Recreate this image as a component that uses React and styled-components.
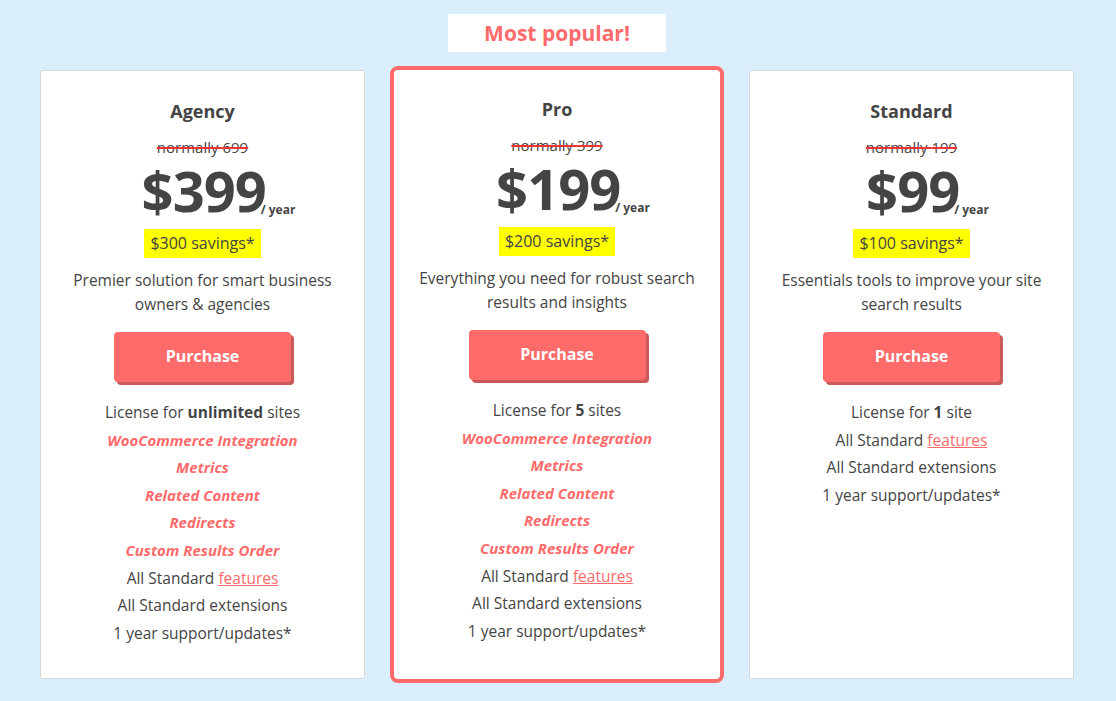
import React from 'react'
import styled, { createGlobalStyle } from 'styled-components'

const GlobalStyle = createGlobalStyle`
  body {
    margin: 0;
    background: #dbeefc;
    font-family: "Open Sans", "Noto Sans", sans-serif;
    color: #444;
  }
`

const plans = [
  {
    name: 'Agency',
    was: 699,
    price: 399,
    savings: 300,
    desc: ['Premier solution for smart business', 'owners & agencies'],
    license: 'unlimited',
    licenseTail: 'sites',
    extras: ['WooCommerce Integration', 'Metrics', 'Related Content', 'Redirects', 'Custom Results Order'],
  },
  {
    name: 'Pro',
    was: 399,
    price: 199,
    savings: 200,
    desc: ['Everything you need for robust search', 'results and insights'],
    license: '5',
    licenseTail: 'sites',
    extras: ['WooCommerce Integration', 'Metrics', 'Related Content', 'Redirects', 'Custom Results Order'],
    popular: true,
  },
  {
    name: 'Standard',
    was: 199,
    price: 99,
    savings: 100,
    desc: ['Essentials tools to improve your site', 'search results'],
    license: '1',
    licenseTail: 'site',
    extras: [],
  },
]

export default function App() {
  return (
    <>
      <GlobalStyle />
      <Page>
        <BadgeRow>
          <Badge>Most popular!</Badge>
        </BadgeRow>
        <Cards>
          {plans.map((p) => (
            <Card key={p.name} $popular={p.popular}>
              <Title>{p.name}</Title>
              <Was>normally {p.was}</Was>
              <PriceRow>
                <Price>${p.price}</Price>
                <Per>/ year</Per>
              </PriceRow>
              <Savings>${p.savings} savings*</Savings>
              <Desc>
                {p.desc[0]}
                <br />
                {p.desc[1]}
              </Desc>
              <Button>Purchase</Button>
              <List>
                <Item>
                  License for <b>{p.license}</b> {p.licenseTail}
                </Item>
                {p.extras.map((e) => (
                  <Extra key={e}>{e}</Extra>
                ))}
                <Item>
                  All Standard <Link>features</Link>
                </Item>
                <Item>All Standard extensions</Item>
                <Item>1 year support/updates*</Item>
              </List>
            </Card>
          ))}
        </Cards>
      </Page>
    </>
  )
}

const Page = styled.div`
  width: 1116px;
  height: 701px;
  box-sizing: border-box;
  padding-top: 14px;
`

const BadgeRow = styled.div`
  display: flex;
  padding-left: 448px;
`

const Badge = styled.div`
  width: 218px;
  height: 38px;
  background: #fff;
  color: #ff6b6b;
  font-weight: 700;
  font-size: 21px;
  display: flex;
  align-items: center;
  justify-content: center;
`

const Cards = styled.div`
  display: grid;
  grid-template-columns: 325px 334px 325px;
  column-gap: 25px;
  justify-content: start;
  padding-left: 40px;
  margin-top: 14px;
  align-items: start;
`

const Card = styled.div`
  background: #fff;
  box-sizing: border-box;
  border: ${(p) => (p.$popular ? '4px solid #ff6b6b' : '1px solid #d8d8d8')};
  border-radius: ${(p) => (p.$popular ? '8px' : '2px')};
  height: ${(p) => (p.$popular ? '617px' : '609px')};
  margin-top: ${(p) => (p.$popular ? '0' : '4px')};
  display: flex;
  flex-direction: column;
  align-items: center;
  padding-top: ${(p) => (p.$popular ? '27px' : '28px')};
`

const Title = styled.div`
  font-size: 18px;
  font-weight: 700;
  line-height: 24px;
`

const Was = styled.div`
  margin-top: 16px;
  font-size: 15px;
  line-height: 16px;
  text-decoration: line-through;
  text-decoration-color: #e33;
  text-decoration-thickness: 2px;
`

const PriceRow = styled.div`
  display: flex;
  align-items: flex-end;
  margin-left: 32px;
  margin-top: 4px;
  height: 62px;
`

const Price = styled.div`
  font-size: 56px;
  font-weight: 700;
  line-height: 62px;
  letter-spacing: -1px;
`

const Per = styled.div`
  font-size: 12px;
  font-weight: 700;
  line-height: 12px;
  margin-bottom: 5px;
  margin-left: -5px;
`

const Savings = styled.div`
  margin-top: 8px;
  background: #ffff00;
  padding: 0 6px;
  height: 29px;
  line-height: 29px;
  font-size: 16px;
`

const Desc = styled.div`
  margin-top: 10px;
  font-size: 15.5px;
  line-height: 24px;
  text-align: center;
`

const Button = styled.button`
  margin-top: 16px;
  width: 177px;
  height: 50px;
  border: none;
  border-radius: 4px;
  background: #ff6b6b;
  box-shadow: 3px 3px 0 #c95a5a;
  color: #fff;
  font-family: inherit;
  font-size: 16px;
  font-weight: 700;
  padding-bottom: 3px;
`

const List = styled.div`
  margin-top: 17px;
  display: flex;
  flex-direction: column;
  align-items: center;
`

const Item = styled.div`
  font-size: 15.5px;
  line-height: 27.6px;
  b {
    font-weight: 700;
  }
`

const Extra = styled(Item)`
  color: #ff6b6b;
  font-style: italic;
  font-weight: 700;
  font-size: 15px;
`

const Link = styled.span`
  color: #ff6b6b;
  text-decoration: underline;
`
